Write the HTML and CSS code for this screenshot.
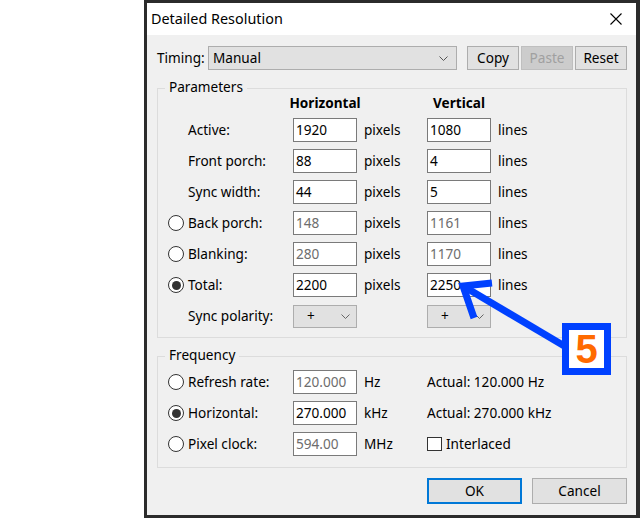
FILE: index.html
```html
<!DOCTYPE html>
<html>
<head>
<meta charset="utf-8">
<title>Detailed Resolution</title>
<link rel="stylesheet" href="styles.css">
</head>
<body>
<div class="window">
  <div class="titlebar">
    <span class="title">Detailed Resolution</span>
    <svg class="close" width="12" height="12" viewBox="0 0 12 12"><path d="M0.5 0.5L11.5 11.5M11.5 0.5L0.5 11.5" stroke="#000" stroke-width="1.1" fill="none"/></svg>
  </div>
  <div class="content">
    <div class="timing">
      <span class="timing-label">Timing:</span>
      <div class="combo wide"><span>Manual</span><svg class="chev" width="9" height="5" viewBox="0 0 9 5"><path d="M0.5 0.5L4.5 4.5L8.5 0.5" stroke="#555" fill="none"/></svg></div>
      <div class="btn">Copy</div>
      <div class="btn disabled">Paste</div>
      <div class="btn">Reset</div>
    </div>

    <fieldset class="group params">
      <legend>Parameters</legend>
      <div class="grid">
        <span></span><span></span><span class="head">Horizontal</span><span></span><span class="head">Vertical</span><span></span>

        <span></span><span class="lbl">Active:</span><div class="field">1920</div><span class="unit">pixels</span><div class="field">1080</div><span class="unit">lines</span>

        <span></span><span class="lbl">Front porch:</span><div class="field">88</div><span class="unit">pixels</span><div class="field">4</div><span class="unit">lines</span>

        <span></span><span class="lbl">Sync width:</span><div class="field">44</div><span class="unit">pixels</span><div class="field">5</div><span class="unit">lines</span>

        <span class="radio"></span><span class="lbl">Back porch:</span><div class="field off">148</div><span class="unit">pixels</span><div class="field off">1161</div><span class="unit">lines</span>

        <span class="radio"></span><span class="lbl">Blanking:</span><div class="field off">280</div><span class="unit">pixels</span><div class="field off">1170</div><span class="unit">lines</span>

        <span class="radio on"></span><span class="lbl">Total:</span><div class="field">2200</div><span class="unit">pixels</span><div class="field">2250</div><span class="unit">lines</span>

        <span></span><span class="lbl">Sync polarity:</span>
        <div class="combo small"><span>+</span><svg class="chev" width="9" height="5" viewBox="0 0 9 5"><path d="M0.5 0.5L4.5 4.5L8.5 0.5" stroke="#666" fill="none"/></svg></div>
        <span></span>
        <div class="combo small"><span>+</span><svg class="chev" width="9" height="5" viewBox="0 0 9 5"><path d="M0.5 0.5L4.5 4.5L8.5 0.5" stroke="#666" fill="none"/></svg></div>
        <span></span>
      </div>
    </fieldset>

    <fieldset class="group freq">
      <legend>Frequency</legend>
      <div class="grid">
        <span class="radio"></span><span class="lbl">Refresh rate:</span><div class="field off">120.000</div><span class="unit">Hz</span><span class="actual">Actual: 120.000 Hz</span><span></span>

        <span class="radio on"></span><span class="lbl">Horizontal:</span><div class="field">270.000</div><span class="unit">kHz</span><span class="actual">Actual: 270.000 kHz</span><span></span>

        <span class="radio"></span><span class="lbl">Pixel clock:</span><div class="field off">594.00</div><span class="unit">MHz</span><span class="check-wrap"><span class="check"></span><span class="lbl">Interlaced</span></span><span></span>
      </div>
    </fieldset>

    <div class="actions">
      <div class="btn big default">OK</div>
      <div class="btn big">Cancel</div>
    </div>
  </div>
</div>

<svg class="annot" width="640" height="518" viewBox="0 0 640 518">
  <polyline points="492,283 463,286 474,318" fill="none" stroke="#0041ff" stroke-width="7" stroke-linejoin="miter"/>
  <line x1="463" y1="286" x2="566" y2="347" stroke="#0041ff" stroke-width="7"/>
</svg>
<div class="badge">5</div>
</body>
</html>
```

FILE: styles.css
```css
* { box-sizing: border-box; }
html, body { margin: 0; padding: 0; }
body {
  background: #fff;
  width: 640px;
  height: 518px;
  overflow: hidden;
  position: relative;
  font-family: "Noto Sans", "Open Sans", sans-serif;
  font-size: 13.6px;
  color: #000;
}
.window {
  margin-left: 144px;
  width: 496px;
  height: 518px;
  border: 3px solid #2b2b2b;
  border-right-width: 4px;
  display: flex;
  flex-direction: column;
  background: #f0f0f0;
}
.titlebar {
  height: 32px;
  flex: none;
  background: #fff;
  display: flex;
  align-items: center;
  justify-content: space-between;
  padding: 0 14px 2px 4px;
}
.title { font-size: 14.4px; }
.close { display: block; margin-top: 2px; }
.content {
  flex: 1;
  padding: 11px 9px 0 10px;
}
.timing {
  display: flex;
  align-items: center;
  height: 24px;
}
.timing-label { width: 51px; padding-bottom: 2px; }
.combo {
  height: 24px;
  background: #e1e1e1;
  border: 1px solid #adadad;
  display: flex;
  align-items: center;
  justify-content: space-between;
}
.combo span { padding-bottom: 2px; }
.combo.wide { width: 249px; margin-right: 10px; padding: 0 8px 0 4px; }
.combo.small { width: 64px; height: 23px; padding: 0 6px 0 13px; }
.chev { display: block; }
.btn {
  width: 52px;
  height: 24px;
  background: #e1e1e1;
  border: 1px solid #adadad;
  display: flex;
  align-items: center;
  justify-content: center;
  padding-bottom: 2px;
}
.timing .btn + .btn { margin-left: 2px; }
.btn.disabled { background: #cccccc; border-color: #bfbfbf; color: #a0a0a0; }

.group {
  margin: 8px 0 0;
  padding: 0;
  border: 1px solid #dcdcdc;
  min-width: 0;
}
.group legend {
  margin-left: 7px;
  padding: 0 4px 2px;
  line-height: 18px;
}
.params legend { margin-bottom: -2px; }
.freq legend { margin-bottom: -2px; }
.grid {
  display: grid;
  grid-template-columns: 30px 105px 64px 70px 64px auto;
  row-gap: 7px;
  align-items: center;
}
.params .grid { grid-template-rows: 14px repeat(7, 24px); padding: 1px 0 9px; }
.freq .grid { grid-template-rows: repeat(3, 24px); padding: 6px 0 11px; }
.head {
  font-weight: bold;
  justify-self: center;
  white-space: nowrap;
  line-height: 14px;
  padding-bottom: 2px;
}
.lbl, .unit, .actual { white-space: nowrap; padding-bottom: 2px; }
.unit { padding-left: 7px; }
.field {
  height: 24px;
  background: #fff;
  border: 1px solid #7a7a7a;
  padding: 0 0 2px 2px;
  display: flex;
  align-items: center;
}
.field.off { color: #6d6d6d; }
.radio {
  width: 16px;
  height: 16px;
  margin-left: 10px;
  border: 1px solid #333;
  border-radius: 50%;
  background: #fff;
  display: flex;
  align-items: center;
  justify-content: center;
}
.radio.on::after {
  content: "";
  width: 9px;
  height: 9px;
  border-radius: 50%;
  background: #333;
}
.check-wrap { display: flex; align-items: center; gap: 4px; white-space: nowrap; }
.check {
  width: 15px;
  height: 14px;
  border: 1px solid #333;
  background: #fff;
  flex: none;
}
.actions {
  display: flex;
  justify-content: flex-end;
  gap: 10px;
  margin-top: 10px;
}
.btn.big { width: 95px; height: 26px; }
.btn.default { border: 2px solid #0078d7; }

.annot { position: absolute; left: 0; top: 0; pointer-events: none; }
.badge {
  position: absolute;
  left: 562px;
  top: 323px;
  width: 49px;
  height: 52px;
  border: 7px solid #0041ff;
  background: #fff;
  color: #ff6a00;
  font-family: "Liberation Sans", sans-serif;
  font-weight: bold;
  font-size: 40px;
  line-height: 1;
  display: flex;
  align-items: center;
  justify-content: center;
}
```
